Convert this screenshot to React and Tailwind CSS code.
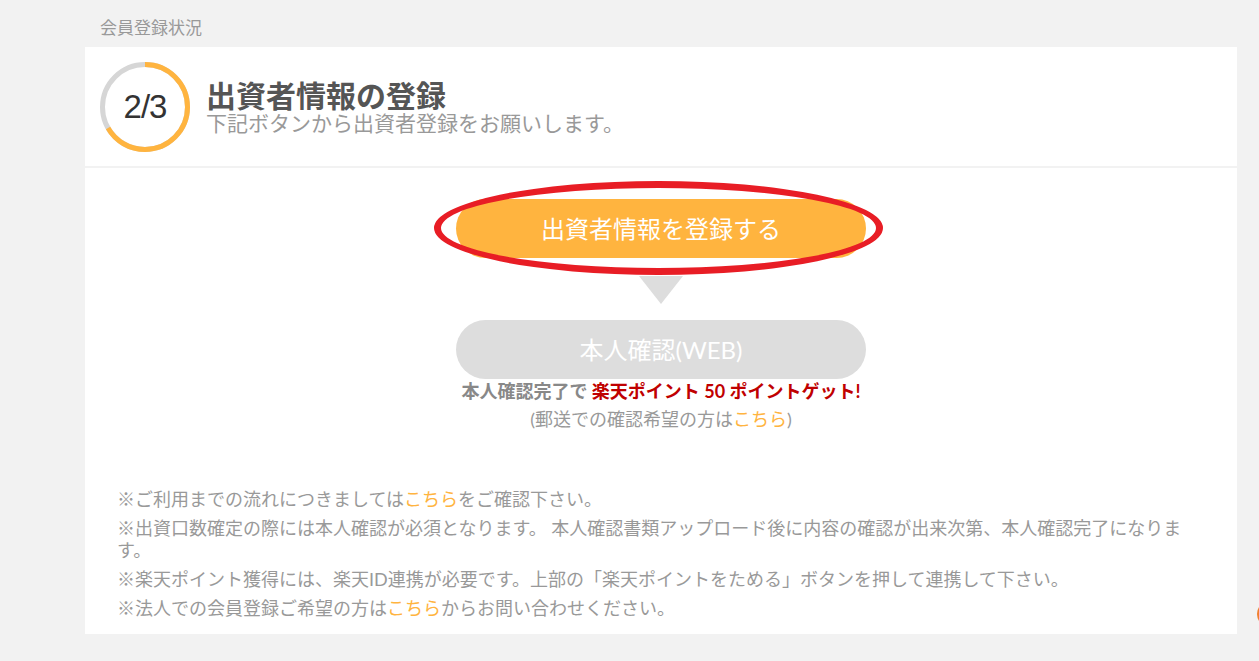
import React from "react";

const font = { fontFamily: "Lato, 'Noto Sans CJK JP', sans-serif" };

const Progress = () => {
  const r = 42.5;
  const c = 2 * Math.PI * r;
  return (
    <div className="relative w-[90px] h-[90px] shrink-0">
      <svg width="90" height="90" viewBox="0 0 90 90" className="-rotate-90">
        <circle cx="45" cy="45" r={r} fill="none" stroke="#d6d6d6" strokeWidth="5" />
        <circle
          cx="45"
          cy="45"
          r={r}
          fill="none"
          stroke="#ffb43f"
          strokeWidth="5"
          strokeDasharray={`${(c * 2) / 3} ${c}`}
        />
      </svg>
      <div className="absolute inset-0 flex items-center justify-center text-[33px] tracking-[-1px] text-[#333] font-['Liberation_Sans',sans-serif]">
        2/3
      </div>
    </div>
  );
};

const Link = ({ children }) => <span className="text-[#ffb43f]">{children}</span>;

export default function App() {
  return (
    <div className="min-h-[661px] bg-[#f2f2f2] relative overflow-hidden" style={font}>
      <div className="ml-[85px] w-[1152px]">
        <p className="pt-[17px] pl-[15px] pb-[8px] text-[17px] leading-[22px] text-[#999]">
          会員登録状況
        </p>

        <div className="bg-white h-[119px] flex items-center pl-[15px] gap-4">
          <Progress />
          <div className="flex flex-col">
            <h1 className="text-[30px] leading-[32px] font-bold text-[#555]">出資者情報の登録</h1>
            <p className="text-[21px] leading-[24px] text-[#999]">
              下記ボタンから出資者登録をお願いします。
            </p>
          </div>
        </div>

        <div className="h-[2px]" />

        <div className="bg-white pt-[31px] pb-[15px] pl-[32px] pr-[45px]">
          <div className="flex flex-col items-center -ml-[32px] -mr-[45px]">
            <div className="relative">
              <button className="w-[410px] h-[59px] rounded-full bg-[#ffb43f] text-white text-[24px]">
                出資者情報を登録する
              </button>
              <div className="absolute left-[-22px] top-[-18px] w-[449px] h-[94px] rounded-[50%] border-[7px] border-[#e81d25]" />
            </div>
            <div className="mt-[18px] w-0 h-0 border-l-[22px] border-r-[22px] border-t-[28px] border-l-transparent border-r-transparent border-t-[#dddddd]" />
            <button className="mt-[16px] w-[410px] h-[59px] rounded-full bg-[#dddddd] text-white text-[24px]">
              本人確認(WEB)
            </button>
            <p className="text-[18px] leading-[24px] font-bold text-[#888]">
              本人確認完了で <span className="text-[#c00000]">楽天ポイント 50 ポイントゲット!</span>
            </p>
            <p className="mt-[4px] text-[18px] leading-[24px] text-[#999]">
              (郵送での確認希望の方は<Link>こちら</Link>)
            </p>
          </div>

          <ul className="mt-[57px] text-[18px] leading-[22px] text-[#999] flex flex-col gap-[7px]">
            <li>
              ※ご利用までの流れにつきましては<Link>こちら</Link>をご確認下さい。
            </li>
            <li>
              ※出資口数確定の際には本人確認が必須となります。
              本人確認書類アップロード後に内容の確認が出来次第、本人確認完了になります。
            </li>
            <li>
              ※楽天ポイント獲得には、楽天ID連携が必要です。上部の「楽天ポイントをためる」ボタンを押して連携して下さい。
            </li>
            <li>
              ※法人での会員登録ご希望の方は<Link>こちら</Link>からお問い合わせください。
            </li>
          </ul>
        </div>
      </div>
      <div className="absolute left-[1257px] top-[601px] w-[40px] h-[26px] rounded-full bg-[#f08030]" />
    </div>
  );
}
